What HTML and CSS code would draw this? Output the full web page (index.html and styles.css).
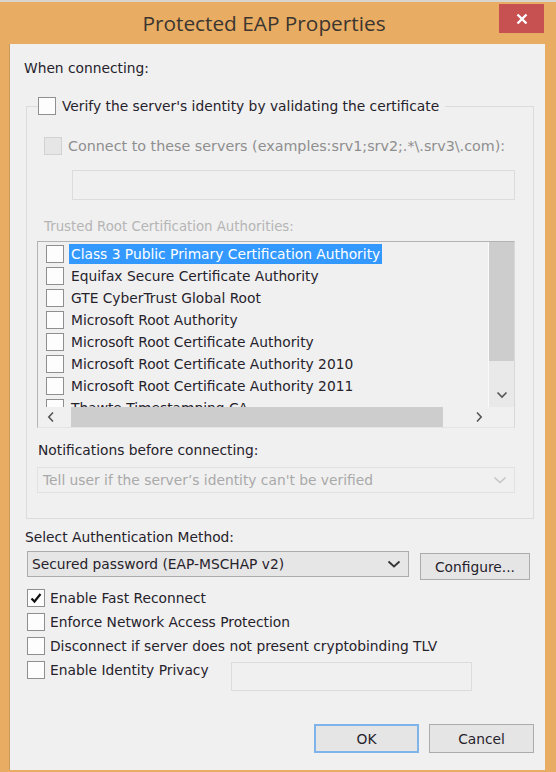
FILE: index.html
```html
<!DOCTYPE html>
<html>
<head>
<meta charset="utf-8">
<link rel="stylesheet" href="styles.css">
</head>
<body>
<div class="window">
  <div class="titlebar">
    <div></div>
    <div class="title">Protected EAP Properties</div>
    <div class="close">
      <svg width="12" height="12" viewBox="0 0 12 12"><path d="M1.5 1.5 L10.5 10.5 M10.5 1.5 L1.5 10.5" stroke="#fff" stroke-width="2.4" fill="none"/></svg>
    </div>
  </div>
  <div class="client">
    <div class="label when">When connecting:</div>
    <div class="group">
      <div class="legend"><span class="cb"></span><span>Verify the server's identity by validating the certificate</span></div>
      <div class="row connect"><span class="cb dis"></span><span>Connect to these servers (examples:srv1;srv2;.*\.srv3\.com):</span></div>
      <div class="textbox servers"></div>
      <div class="trusted">Trusted Root Certification Authorities:</div>
      <div class="list">
        <div class="items">
          <div class="item"><span class="cb"></span><span class="txt sel">Class 3 Public Primary Certification Authority</span></div>
          <div class="item"><span class="cb"></span><span class="txt">Equifax Secure Certificate Authority</span></div>
          <div class="item"><span class="cb"></span><span class="txt">GTE CyberTrust Global Root</span></div>
          <div class="item"><span class="cb"></span><span class="txt">Microsoft Root Authority</span></div>
          <div class="item"><span class="cb"></span><span class="txt">Microsoft Root Certificate Authority</span></div>
          <div class="item"><span class="cb"></span><span class="txt">Microsoft Root Certificate Authority 2010</span></div>
          <div class="item"><span class="cb"></span><span class="txt">Microsoft Root Certificate Authority 2011</span></div>
          <div class="item"><span class="cb"></span><span class="txt">Thawte Timestamping CA</span></div>
        </div>
        <div class="vscroll">
          <div class="vthumb"></div>
          <svg class="varrow" width="12" height="8" viewBox="0 0 12 8"><path d="M1.5 1.5 L6 6 L10.5 1.5" stroke="#555" stroke-width="1.6" fill="none"/></svg>
        </div>
        <div class="hscroll">
          <svg width="8" height="12" viewBox="0 0 8 12"><path d="M6 1.5 L1.8 6 L6 10.5" stroke="#555" stroke-width="1.6" fill="none"/></svg>
          <div class="hthumb"></div>
          <svg width="8" height="12" viewBox="0 0 8 12"><path d="M2 1.5 L6.2 6 L2 10.5" stroke="#555" stroke-width="1.6" fill="none"/></svg>
        </div>
        <div class="corner"></div>
      </div>
      <div class="label notif">Notifications before connecting:</div>
      <div class="select dis"><span>Tell user if the server’s identity can't be verified</span>
        <svg width="14" height="8" viewBox="0 0 14 8"><path d="M1.5 1.5 L7 6.5 L12.5 1.5" stroke="#c4c4c4" stroke-width="1.5" fill="none"/></svg>
      </div>
    </div>
    <div class="label method">Select Authentication Method:</div>
    <div class="method-row">
      <div class="select main"><span>Secured password (EAP-MSCHAP v2)</span>
        <svg width="14" height="8" viewBox="0 0 14 8"><path d="M1.5 1.5 L7 6.5 L12.5 1.5" stroke="#333" stroke-width="1.8" fill="none"/></svg>
      </div>
      <div class="btn configure">Configure...</div>
    </div>
    <div class="options">
      <div class="opt"><span class="cb"><svg width="16" height="16" viewBox="0 0 16 16"><path d="M3.5 8.5 L6.5 11.5 L12.5 4" stroke="#111" stroke-width="2.2" fill="none"/></svg></span><span>Enable Fast Reconnect</span></div>
      <div class="opt"><span class="cb"></span><span>Enforce Network Access Protection</span></div>
      <div class="opt"><span class="cb"></span><span>Disconnect if server does not present cryptobinding TLV</span></div>
      <div class="opt identity"><span class="cb"></span><span>Enable Identity Privacy</span><div class="textbox idbox"></div></div>
    </div>
    <div class="actions">
      <div class="btn ok">OK</div>
      <div class="btn">Cancel</div>
    </div>
  </div>
</div>
</body>
</html>
```
FILE: styles.css
```css
html, body {
  margin: 0;
  padding: 0;
}
body {
  width: 556px;
  height: 772px;
  overflow: hidden;
  font-family: "DejaVu Sans", sans-serif;
  font-size: 13.8px;
  color: #26222c;
}
.window {
  width: 556px;
  height: 772px;
  box-sizing: border-box;
  background: #e8ad63;
  border-top: 2px solid #d8d4ce;
  display: flex;
  flex-direction: column;
}
.titlebar {
  height: 42px;
  display: grid;
  grid-template-columns: 1fr auto 1fr;
}
.title {
  font-family: "Open Sans", sans-serif;
  font-size: 20.8px;
  color: #3b3530;
  line-height: 42px;
  margin-right: 28px;
}
.close {
  justify-self: end;
  width: 45px;
  height: 29px;
  margin-top: 2px;
  margin-right: 12px;
  background: #c75050;
  display: flex;
  align-items: center;
  justify-content: center;
}
.client {
  flex: 1;
  margin: 0 11px 2px 9px;
  border-left: 1px solid #c99a5c;
  background: #f0f0f0;
  display: flex;
  flex-direction: column;
  padding: 16px 11px 17px 0;
}
.label {
  line-height: 16px;
  white-space: nowrap;
}
.when { margin-left: 14px; }
.cb {
  width: 18px;
  height: 18px;
  box-sizing: border-box;
  border: 1px solid #8f8f8f;
  background: #fdfdfd;
  flex: none;
  display: flex;
  align-items: center;
  justify-content: center;
}
.cb.dis {
  background: #e6e6e6;
  border-color: #d2d2d2;
}
.group {
  margin: 30px 0 0 16px;
  width: 508px;
  box-sizing: border-box;
  border: 1px solid #dcdcdc;
  padding: 0 18px 25px 10px;
  display: flex;
  flex-direction: column;
}
.legend {
  margin: -10px 0 0 1px;
  height: 18px;
  display: flex;
  align-items: center;
  gap: 6px;
  background: #f0f0f0;
  width: max-content;
  padding-right: 6px;
  white-space: nowrap;
}
.row {
  display: flex;
  align-items: center;
  gap: 6px;
  height: 18px;
  white-space: nowrap;
}
.connect {
  margin: 22px 0 0 7px;
  color: #8e8e8e;
  font-size: 14.3px;
}
.textbox {
  box-sizing: border-box;
  border: 1px solid #dcdcdc;
  background: #f0f0f0;
}
.servers {
  margin: 15px 0 0 35px;
  height: 30px;
}
.trusted {
  margin: 19px 0 0 7px;
  line-height: 16px;
  color: #b5b5b5;
  font-size: 13.3px;
}
.list {
  margin-top: 6px;
  height: 187px;
  box-sizing: border-box;
  border: 1px solid #b3b3b3;
  border-right-color: #d8d8d8;
  border-bottom-color: #e4e4e4;
  display: grid;
  grid-template-columns: 1fr 25px;
  grid-template-rows: 165px 20px;
}
.items {
  overflow: hidden;
  padding: 1px 0 0 8px;
  border-right: 1px solid #fafafa;
}
.item {
  height: 22px;
  display: flex;
  align-items: center;
  gap: 5px;
  white-space: nowrap;
}
.txt {
  padding: 0 2px;
  line-height: 20px;
}
.txt.sel {
  background: #3399ff;
  color: #fff;
}
.vscroll {
  background: #e9e9e9;
  display: flex;
  flex-direction: column;
  align-items: center;
}
.vthumb {
  width: 25px;
  height: 119px;
  background: #cdcdcd;
}
.varrow {
  margin-top: 30px;
}
.hscroll {
  display: flex;
  align-items: center;
  padding-left: 9px;
  background: #f0f0f0;
}
.hthumb {
  width: 372px;
  height: 20px;
  background: #cdcdcd;
  margin: 0 32px 0 16px;
}
.corner {
  background: #f0f0f0;
}
.notif {
  margin: 14px 0 0 1px;
}
.select {
  height: 26px;
  box-sizing: border-box;
  border: 1px solid #acacac;
  background: #e6e6e6;
  display: flex;
  align-items: center;
  justify-content: space-between;
  padding: 0 6px 0 4px;
  white-space: nowrap;
}
.select.dis {
  margin-top: 9px;
  border-color: #e2e2e2;
  background: #f0f0f0;
  color: #a9a9a9;
  padding-left: 5px;
  padding-right: 7px;
}
.method {
  margin: 10px 0 0 15px;
}
.method-row {
  margin: 6px 0 0 17px;
  display: flex;
  align-items: flex-start;
}
.select.main {
  width: 382px;
  padding-right: 7px;
}
.btn {
  box-sizing: border-box;
  border: 1px solid #acacac;
  background: #e5e5e5;
  display: flex;
  align-items: center;
  justify-content: center;
  white-space: nowrap;
}
.configure {
  margin: 2px 0 0 11px;
  width: 110px;
  height: 27px;
}
.options {
  margin: 9px 0 0 17px;
  display: flex;
  flex-direction: column;
  gap: 6px;
}
.opt {
  height: 18px;
  display: flex;
  align-items: center;
  gap: 5px;
  white-space: nowrap;
}
.opt.identity {
  display: grid;
  grid-template-columns: 18px 176px 241px;
  column-gap: 5px;
  align-items: start;
}
.opt.identity > span:nth-child(2) {
  line-height: 18px;
}
.idbox {
  margin-top: 1px;
  height: 29px;
}
.actions {
  margin-top: auto;
  display: flex;
  justify-content: flex-end;
  gap: 10px;
}
.actions .btn {
  width: 105px;
  height: 29px;
}
.btn.ok {
  border: 2px solid #7eb4ea;
}
```
